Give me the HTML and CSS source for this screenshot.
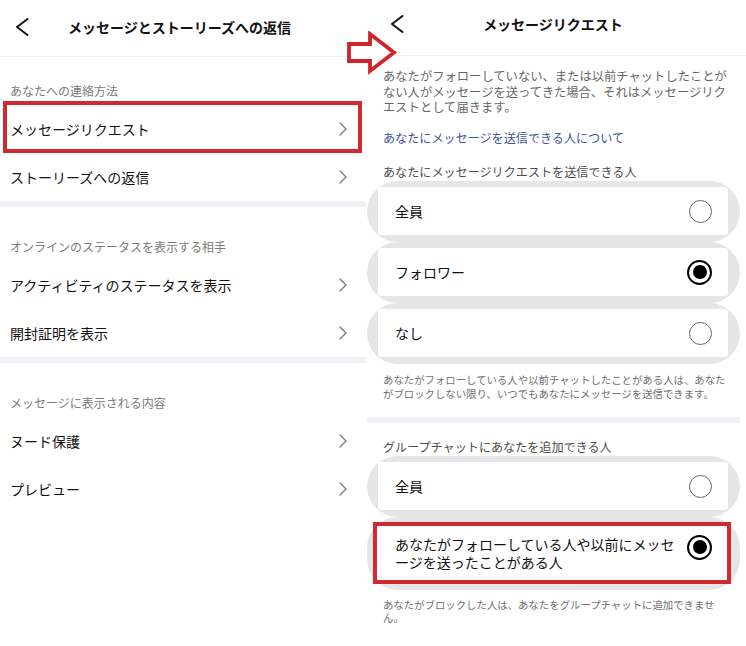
FILE: index.html
```html
<!DOCTYPE html>
<html lang="ja">

<head>
    <meta charset="UTF-8">
    <meta name="viewport" content="width=device-width, initial-scale=1.0">
    <title>メッセージリクエスト</title>
    <link rel="stylesheet" href="styles.css">
</head>

<body>
    <main class="screens">
        <!-- 左: メッセージとストーリーズへの返信 -->
        <section class="screen screen--left">
            <header class="header header--left">
                <svg class="back" width="14" height="18" viewBox="0 0 14 18"><path d="M12.5 1 L2 9 L12.5 17" fill="none" stroke="#111" stroke-width="2" stroke-linecap="round" stroke-linejoin="round"/></svg>
                <h1 class="title">メッセージとストーリーズへの返信</h1>
            </header>

            <div class="group group--first">
                <p class="group__label">あなたへの連絡方法</p>
                <div class="row row--marked"><span>メッセージリクエスト</span><svg class="chev" width="8" height="14" viewBox="0 0 8 14"><path d="M1 1 L7 7 L1 13" fill="none" stroke="#777" stroke-width="1.3" stroke-linecap="round" stroke-linejoin="round"/></svg></div>
                <div class="row"><span>ストーリーズへの返信</span><svg class="chev" width="8" height="14" viewBox="0 0 8 14"><path d="M1 1 L7 7 L1 13" fill="none" stroke="#777" stroke-width="1.3" stroke-linecap="round" stroke-linejoin="round"/></svg></div>
            </div>
            <div class="band"></div>

            <div class="group">
                <p class="group__label">オンラインのステータスを表示する相手</p>
                <div class="row"><span>アクティビティのステータスを表示</span><svg class="chev" width="8" height="14" viewBox="0 0 8 14"><path d="M1 1 L7 7 L1 13" fill="none" stroke="#777" stroke-width="1.3" stroke-linecap="round" stroke-linejoin="round"/></svg></div>
                <div class="row"><span>開封証明を表示</span><svg class="chev" width="8" height="14" viewBox="0 0 8 14"><path d="M1 1 L7 7 L1 13" fill="none" stroke="#777" stroke-width="1.3" stroke-linecap="round" stroke-linejoin="round"/></svg></div>
            </div>
            <div class="band"></div>

            <div class="group">
                <p class="group__label">メッセージに表示される内容</p>
                <div class="row"><span>ヌード保護</span><svg class="chev" width="8" height="14" viewBox="0 0 8 14"><path d="M1 1 L7 7 L1 13" fill="none" stroke="#777" stroke-width="1.3" stroke-linecap="round" stroke-linejoin="round"/></svg></div>
                <div class="row"><span>プレビュー</span><svg class="chev" width="8" height="14" viewBox="0 0 8 14"><path d="M1 1 L7 7 L1 13" fill="none" stroke="#777" stroke-width="1.3" stroke-linecap="round" stroke-linejoin="round"/></svg></div>
            </div>
        </section>

        <!-- 右: メッセージリクエスト -->
        <section class="screen screen--right">
            <header class="header header--right">
                <svg class="back" width="14" height="18" viewBox="0 0 14 18"><path d="M12.5 1 L2 9 L12.5 17" fill="none" stroke="#111" stroke-width="2" stroke-linecap="round" stroke-linejoin="round"/></svg>
                <h1 class="title">メッセージリクエスト</h1>
                <span></span>
            </header>

            <p class="intro">あなたがフォローしていない、または以前チャットしたことがない人がメッセージを送ってきた場合、それはメッセージリクエストとして届きます。</p>
            <p class="link">あなたにメッセージを送信できる人について</p>

            <p class="label">あなたにメッセージリクエストを送信できる人</p>
            <div class="options">
                <div class="option"><div class="option__card"><span>全員</span><i class="radio"></i></div></div>
                <div class="option"><div class="option__card"><span>フォロワー</span><i class="radio radio--on"></i></div></div>
                <div class="option"><div class="option__card"><span>なし</span><i class="radio"></i></div></div>
            </div>
            <p class="note">あなたがフォローしている人や以前チャットしたことがある人は、あなたがブロックしない限り、いつでもあなたにメッセージを送信できます。</p>

            <div class="band band--right"></div>

            <p class="label label--group">グループチャットにあなたを追加できる人</p>
            <div class="options">
                <div class="option"><div class="option__card"><span>全員</span><i class="radio"></i></div></div>
                <div class="option option--marked"><div class="option__card"><span class="option__text">あなたがフォローしている人や以前にメッセージを送ったことがある人</span><i class="radio radio--on"></i></div></div>
            </div>
            <p class="note note--last">あなたがブロックした人は、あなたをグループチャットに追加できません。</p>
        </section>
    </main>

    <!-- 画面の間の矢印 -->
    <svg class="arrow" width="52" height="44" viewBox="0 0 52 44"><polygon points="3,13 24,13 24,3 48,21.5 24,40 24,30 3,30" fill="#fff" stroke="#d0242c" stroke-width="3.8"/></svg>
</body>

</html>
```

FILE: styles.css
```css
* {
    margin: 0;
    padding: 0;
    box-sizing: border-box;
}

body {
    width: 746px;
    height: 646px;
    overflow: hidden;
    position: relative;
    background-color: #fff;
    color: #111;
    font-family: "Noto Sans CJK JP", "Noto Sans", sans-serif;
}

.screens {
    display: flex;
}

.screen--left {
    width: 367px;
}

.screen--right {
    width: 379px;
}

/* header */
.header {
    border-bottom: 1px solid #f0f0f0;
}

.header--left {
    height: 57px;
    display: flex;
    align-items: center;
    padding: 0 0 3px 15px;
}

.header--left .title {
    margin-left: 39px;
}

.header--right {
    height: 56px;
    display: grid;
    grid-template-columns: 1fr auto 1fr;
    align-items: center;
    padding: 0 30px 8px 23px;
}

.title {
    font-size: 14px;
    font-weight: 700;
    line-height: 18px;
}

.back {
    display: block;
}

/* left list */
.group__label {
    font-size: 12px;
    line-height: 18px;
    color: #7b7b7b;
    padding: 31px 10px 0;
    margin-bottom: 5px;
}

.group--first .group__label {
    padding-top: 25px;
    margin-bottom: 1px;
}

.row {
    height: 48px;
    display: flex;
    align-items: center;
    justify-content: space-between;
    padding: 0 20px 0 10px;
    font-size: 14px;
}

.row--marked {
    height: 52px;
    border: 4px solid #cf2a32;
    margin: 0 5px 0 3px;
    padding: 3px 11px 0 3px;
}

.chev {
    display: block;
    flex: none;
}

.band {
    height: 6px;
    background-color: #eef2f4;
    margin-right: 1px;
}

/* right page */
.intro {
    padding: 13px 16px 0;
    font-size: 12.3px;
    line-height: 15.5px;
    color: #666;
}

.link {
    padding: 14px 16px 0;
    font-size: 12.1px;
    line-height: 15.5px;
    color: #3d55a0;
}

.label {
    padding: 19px 16px 0;
    font-size: 12.1px;
    line-height: 16px;
    color: #4d4d4d;
}

.label--group {
    padding-top: 16px;
}

.options {
    margin-top: 1px;
}

.option {
    background-color: #e6e6e8;
    border-radius: 31px;
    margin-right: 6px;
    padding: 6px 12px 7px 11px;
}

.option__card {
    height: 48px;
    display: flex;
    align-items: center;
    justify-content: space-between;
    gap: 6px;
    padding: 0 16px 0 17px;
    background-color: #fff;
    border-radius: 3px;
    font-size: 14px;
}

.option--marked {
    padding: 5px 9px 6px 6px;
}

.option--marked .option__card {
    height: 62px;
    border: 4px solid #cf2a32;
    border-radius: 0;
    padding: 0 15px 0 18px;
}

.option--marked .radio {
    margin-bottom: 12px;
}

.option__text {
    line-height: 18px;
    line-break: loose;
}

.radio {
    flex: none;
    width: 23px;
    height: 23px;
    border: 1.3px solid #666;
    border-radius: 50%;
}

.radio--on {
    width: 25px;
    height: 25px;
    border: 2.5px solid #000;
    display: flex;
    align-items: center;
    justify-content: center;
}

.radio--on::after {
    content: "";
    width: 14px;
    height: 14px;
    border-radius: 50%;
    background-color: #000;
}

.note {
    padding: 9px 16px 0;
    font-size: 10.4px;
    line-height: 13.5px;
    color: #707070;
}

.note--last {
    padding-top: 7.5px;
}

.band--right {
    margin: 17px 6px 0 0;
}

/* 矢印 */
.arrow {
    position: absolute;
    left: 346px;
    top: 31px;
}
```
